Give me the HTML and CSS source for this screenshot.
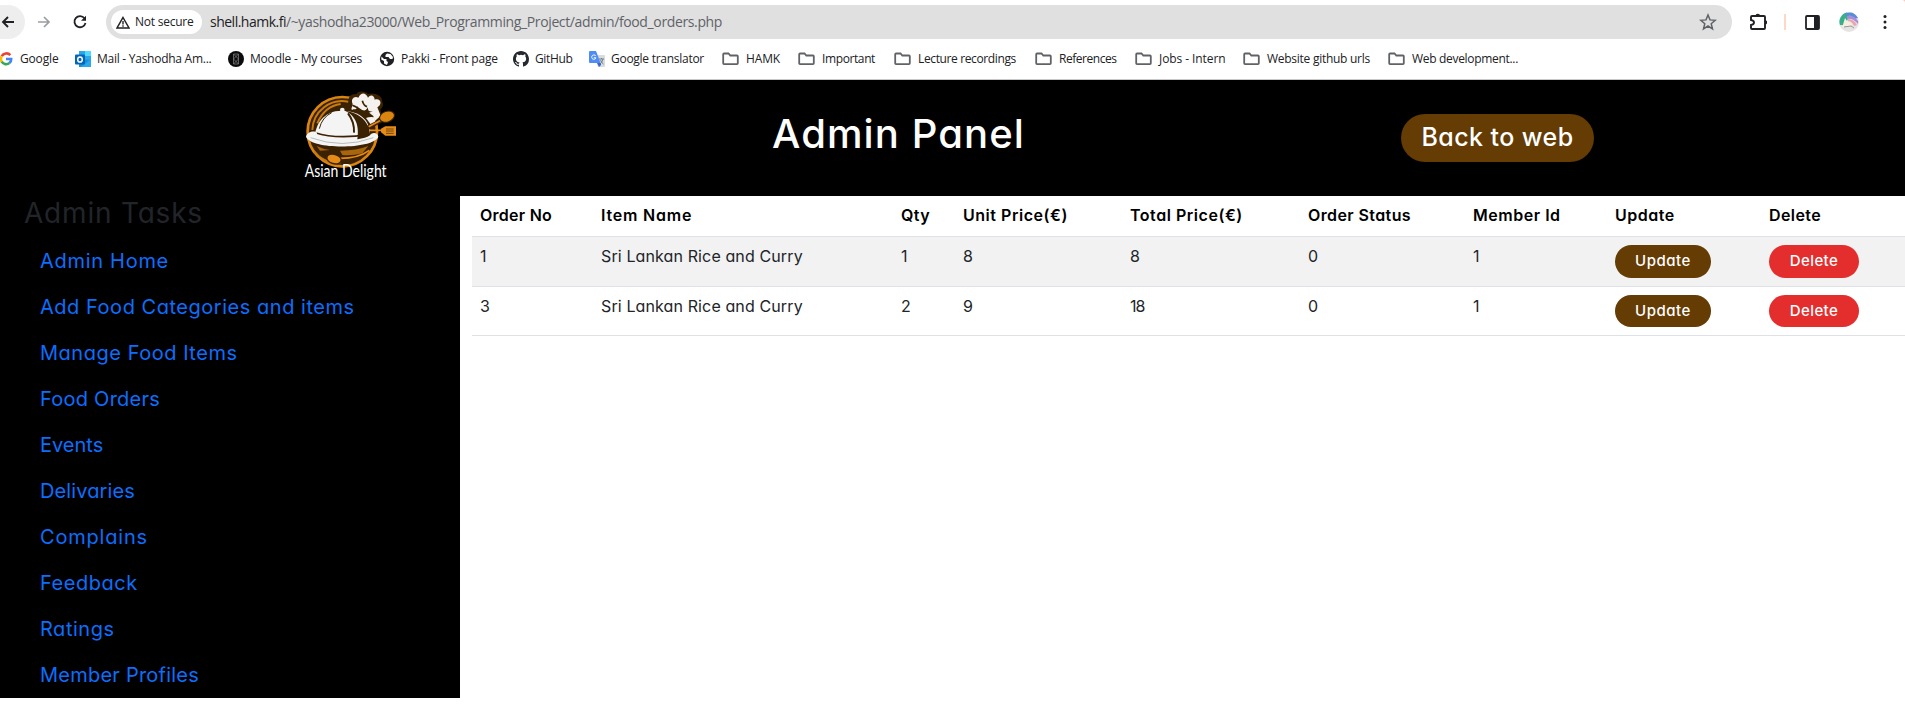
FILE: index.html
```html
<!DOCTYPE html>
<html lang="en">
<head>
<meta charset="utf-8">
<title>Food Orders</title>
<link rel="stylesheet" href="styles.css">
</head>
<body>
<div class="browser">
  <div class="toolbar">
    <span class="nav back"><svg width="16" height="16" viewBox="0 0 16 16"><path d="M14 8H3M8 3L3 8l5 5" fill="none" stroke="#202124" stroke-width="1.9"/></svg></span>
    <span class="nav forward"><svg width="16" height="16" viewBox="0 0 16 16"><path d="M2 8h11M8 3l5 5-5 5" fill="none" stroke="#9b9ea1" stroke-width="1.7"/></svg></span>
    <span class="nav reload"><svg width="16" height="16" viewBox="0 0 16 16"><path d="M12.500 4.200A5.600 5.600 0 1 0 13.500 9" fill="none" stroke="#202124" stroke-width="1.800"/><path d="M14 1.800v5H9z" fill="#202124"/></svg></span>
    <div class="omnibox">
      <span class="security"><svg width="14" height="13" viewBox="0 0 14 13"><path d="M7 1.500L13 12H1z" fill="none" stroke="#202124" stroke-width="1.500"/><path d="M7 5v3.400M7 9.300v1.500" stroke="#202124" stroke-width="1.400"/></svg><span class="t-secure">Not secure</span></span>
      <span class="url"><span class="domain">shell.hamk.fi</span><span class="path">/~yashodha23000/Web_Programming_Project/admin/food_orders.php</span></span>
      <svg class="star" width="18" height="18" viewBox="0 0 18 18"><path d="M9 2l2 4.900 5.200.4-4 3.400 1.300 5.200L9 13l-4.500 2.900 1.300-5.200-4-3.400 5.200-.4z" fill="none" stroke="#5f6368" stroke-width="1.500"/></svg>
    </div>
    <svg class="puzzle" width="18" height="18" viewBox="0 0 18 18"><path d="M3 3h12q1 0 1 1v11q0 1-1 1H3q-1 0-1-1v-3q3-.5 3-2.500T2 7V4q0-1 1-1z" fill="none" stroke="#202124" stroke-width="1.900"/><path d="M6.500 3a2.300 2.300 0 0 1 4.600 0zM16 7.200a2 2 0 0 1 0 4.400z" fill="#202124"/></svg>
    <span class="sep"></span>
    <svg class="panel" width="15" height="15" viewBox="0 0 15 15"><rect x="1" y="1" width="13" height="13" rx="1" fill="none" stroke="#202124" stroke-width="1.800"/><path d="M9 1h5v13H9z" fill="#202124"/></svg>
    <svg class="avatar" width="20" height="20" viewBox="0 0 20 20"><circle cx="10" cy="10" r="10" fill="#e6e4e2"/><path d="M1 13A9.500 9.500 0 0 1 8 .6L11 4 5 13z" fill="#35b08b"/><path d="M7 1q8-2.500 12 5l-4 1q-3-5-8-3z" fill="#598bd8"/><path d="M8 4q7-1 11 5v3q-5-6-11-5z" fill="#a88ddc"/><path d="M9 7q6 0 9 6l-3 1q-2-5-6-5z" fill="#eaa4ad"/><path d="M6 6l2 3 5 3-2 3-5-1-3 2z" fill="#f5efdf"/><path d="M5 15l7-1 3 2" fill="none" stroke="#999" stroke-width="1"/></svg>
    <svg class="dots" width="4" height="16" viewBox="0 0 4 16"><circle cx="2" cy="2.500" r="1.500"/><circle cx="2" cy="8" r="1.500"/><circle cx="2" cy="13.500" r="1.500"/></svg>
    <svg class="corner" width="3" height="3" viewBox="0 0 3 3"><path d="M0 0h3v3Q3 0 0 0z" fill="#ffc4ac"/></svg>
  </div>
  <div class="bookmarks">
    <span class="bm b1"><svg width="16" height="16" viewBox="0 0 16 16"><g fill="none" stroke-width="2.600"><path d="M12.300 4.200A5.200 5.200 0 0 0 3.700 5.300" stroke="#ea4335"/><path d="M3.700 5.300a5.200 5.200 0 0 0 0 5.400" stroke="#fbbc05"/><path d="M3.700 10.700a5.200 5.200 0 0 0 7.700 1.400" stroke="#34a853"/><path d="M11.400 12.100A5 5 0 0 0 13.200 8H8" stroke="#4285f4"/></g></svg><span>Google</span></span>
    <span class="bm b2"><svg width="16" height="16" viewBox="0 0 16 16"><path d="M4 0h12v10H4z" fill="#28a8ea"/><path d="M10 0h6v5h-6z" fill="#50d9ff"/><path d="M4 8l12 1v7H4z" fill="#1490df"/><path d="M16 8v8H6z" fill="#28a8ea"/><rect y="3.500" width="10" height="10" rx="1" fill="#0364b8"/><ellipse cx="5" cy="8.500" rx="2.300" ry="2.600" fill="none" stroke="#fff" stroke-width="1.500"/></svg><span>Mail - Yashodha Am...</span></span>
    <span class="bm b3"><svg width="16" height="16" viewBox="0 0 16 16"><circle cx="8" cy="8" r="8" fill="#0b0b0b"/><path d="M5.500 3h5v10h-5zM5.500 3l5 5-5 5M10.500 3l-5 5 5 5" fill="none" stroke="#777" stroke-width=".8"/></svg><span>Moodle - My courses</span></span>
    <span class="bm b4"><svg width="16" height="16" viewBox="0 0 16 16"><circle cx="8" cy="8" r="7.200" fill="#202124"/><path d="M2.500 5.500L5 8h2.500v2L9 11l-1 3-3-1.500V10L2.200 8.500zM8 2.500L6.500 4v2h3L11 8h2.500l.5-2-2.500-3z" fill="#fff"/></svg><span>Pakki - Front page</span></span>
    <span class="bm b5"><svg width="16" height="16" viewBox="0 0 16 16"><path d="M8 0C3.580 0 0 3.580 0 8c0 3.540 2.290 6.530 5.470 7.590.4.070.55-.17.55-.38 0-.19-.01-.82-.01-1.490-2.010.37-2.530-.49-2.690-.94-.09-.23-.48-.94-.82-1.130-.28-.15-.68-.52-.01-.53.63-.01 1.080.58 1.230.82.72 1.210 1.870.87 2.330.66.070-.52.28-.87.51-1.070-1.780-.2-3.640-.89-3.640-3.950 0-.87.31-1.590.82-2.150-.08-.2-.36-1.020.08-2.120 0 0 .67-.21 2.200.82a7.420 7.420 0 0 1 4 0c1.530-1.040 2.200-.82 2.200-.82.44 1.100.16 1.920.08 2.120.51.56.82 1.270.82 2.150 0 3.070-1.870 3.750-3.650 3.950.29.25.54.73.54 1.480 0 1.070-.01 1.930-.01 2.200 0 .21.15.46.55.38A8 8 0 0 0 16 8c0-4.420-3.580-8-8-8z" fill="#24292f"/></svg><span>GitHub</span></span>
    <span class="bm b6"><svg width="16" height="16" viewBox="0 0 16 16"><path d="M6 4h9q1 0 1 1v10q0 1-1 1H9z" fill="#dadada"/><path d="M8 12h4v2l-2 2z" fill="#3a66c8"/><path d="M1 0h6l1 2.500L11.500 12H1q-1 0-1-1V1q0-1 1-1z" fill="#4f8df5"/><path d="M6.800 5A2.200 2.200 0 1 0 7 6.800H4.800" fill="none" stroke="#fff"/><path d="M10 8h5M12.500 7v1M14 8q-1 4-3 5M11.500 9q1 3 3 4" fill="none" stroke="#66788a" stroke-width=".9"/></svg><span>Google translator</span></span>
    <span class="bm b7 folder"><svg width="17" height="14" viewBox="0 0 17 14"><path d="M2 1.500h4.500l1.800 2H15q.8 0 .8.800v7q0 .8-.8.800H2q-.8 0-.8-.8v-9q0-.8.8-.8z"/></svg><span>HAMK</span></span>
    <span class="bm b8 folder"><svg width="17" height="14" viewBox="0 0 17 14"><path d="M2 1.500h4.500l1.800 2H15q.8 0 .8.800v7q0 .8-.8.800H2q-.8 0-.8-.8v-9q0-.8.8-.8z"/></svg><span>Important</span></span>
    <span class="bm b9 folder"><svg width="17" height="14" viewBox="0 0 17 14"><path d="M2 1.500h4.500l1.800 2H15q.8 0 .8.800v7q0 .8-.8.800H2q-.8 0-.8-.8v-9q0-.8.8-.8z"/></svg><span>Lecture recordings</span></span>
    <span class="bm b10 folder"><svg width="17" height="14" viewBox="0 0 17 14"><path d="M2 1.500h4.500l1.800 2H15q.8 0 .8.800v7q0 .8-.8.800H2q-.8 0-.8-.8v-9q0-.8.8-.8z"/></svg><span>References</span></span>
    <span class="bm b11 folder"><svg width="17" height="14" viewBox="0 0 17 14"><path d="M2 1.500h4.500l1.800 2H15q.8 0 .8.800v7q0 .8-.8.800H2q-.8 0-.8-.8v-9q0-.8.8-.8z"/></svg><span>Jobs - Intern</span></span>
    <span class="bm b12 folder"><svg width="17" height="14" viewBox="0 0 17 14"><path d="M2 1.500h4.500l1.800 2H15q.8 0 .8.800v7q0 .8-.8.800H2q-.8 0-.8-.8v-9q0-.8.8-.8z"/></svg><span>Website github urls</span></span>
    <span class="bm b13 folder"><svg width="17" height="14" viewBox="0 0 17 14"><path d="M2 1.500h4.500l1.800 2H15q.8 0 .8.800v7q0 .8-.8.800H2q-.8 0-.8-.8v-9q0-.8.8-.8z"/></svg><span>Web development...</span></span>
  </div>
</div>
<header class="site-header">
  <svg class="logo" width="120" height="110" viewBox="0 0 360 330">
    <circle cx="157" cy="155" r="108" fill="#3b2203"/>
    <circle cx="157" cy="155" r="104" fill="none" stroke="#d9850f" stroke-width="8"/>
    <path d="M67 150a90 90 0 0 1 108-85M82 130q22-52 70-58M72 215q32 38 80 32" fill="none" stroke="#c87a10" stroke-width="6"/>
    <path d="M80 198q20 10 40 12l-30 2zM150 212q50 0 85-14l-18 22q-30 8-60 5z" fill="#a9650c"/>
    <path d="M178 72c-8-20 5-32 22-30 5-12 28-8 34 0 18-6 46 6 42 22 8 12-2 22-5 25l7 25-28 20-30-30z" fill="#3b2203"/>
    <path d="M188 72c-7-15 5-25 17-19 10-20 24-12 29 0 8-12 20-6 20 6 20-6 23 16 8 23l10 25-24 22-26-24 26-11c-14 2-14-4-14-12-8 16-28 14-32-4-2 12-10 16-18 10z" fill="#f4f1ee"/>
    <path d="M187 76q18 6 33 22M217 62q4 15 14 18" fill="none" stroke="#3b2203" stroke-width="5"/>
    <path d="M188 88q38-4 62 20l6 24q-40-8-68-34z" fill="#3b2203"/>
    <path d="M228 114q10-4 24-2l6 18-14 6z" fill="#f4f1ee"/>
    <path d="M155 92c68 0 90 44 84 80l-7 18H82l-8-18c2-40 28-80 81-80z" fill="#f4f4f4"/>
    <path d="M165 92c46 22 40 66 36 96h38c8-40-10-86-74-96z" fill="#3b2203"/>
    <path d="M174 100q20 26 18 58" fill="none" stroke="#3b2203" stroke-width="6"/>
    <path d="M76 158q60 20 160 6" fill="none" stroke="#3b2203" stroke-width="5"/>
    <path d="M88 146q8-34 37-48" fill="none" stroke="#3b2203" stroke-width="3"/>
    <circle cx="157" cy="90" r="7" fill="#f4f4f4"/>
    <path d="M48 170c5-17 25-18 34-12-18 24 145 32 161 4 10-6 20-2 22 8-14 38-202 40-217 0z" fill="#f4f4f4"/>
    <path d="M62 173q95 35 188 0" fill="none" stroke="#bbb" stroke-width="3"/>
    <path d="M233 143l42-22" stroke="#3b2203" stroke-width="12"/>
    <path d="M236 140l42-22" stroke="#e78b17" stroke-width="5"/>
    <ellipse cx="291" cy="110" rx="23" ry="16" transform="rotate(-20 291 110)" fill="#d9850f" stroke="#3b2203" stroke-width="3"/>
    <path d="M238 151h38" stroke="#e78b17" stroke-width="5"/>
    <path d="M273 146l13-7h32v28h-32l-13-10z" fill="#e78b17"/>
    <path d="M288 147h23M288 153h23M288 160h23" stroke="#3b2203" stroke-width="2"/>
    <path d="M150 235q55 0 88-24" fill="none" stroke="#e78b17" stroke-width="5"/>
    <ellipse cx="132" cy="237" rx="22" ry="14" transform="rotate(15 132 237)" fill="#e78b17" stroke="#3b2203" stroke-width="4"/>
    <text class="logo-name" x="44" y="292" textLength="246" lengthAdjust="spacingAndGlyphs">Asian Delight</text>
  </svg>
  <h1 class="title">Admin Panel</h1>
  <a class="pill web"><span>Back to web</span></a>
</header>
<main class="layout">
  <aside class="sidebar">
    <h2 class="tasks">Admin Tasks</h2>
    <ul class="menu">
      <li class="ls-7">Admin Home</li>
      <li class="ls-5">Add Food Categories and items</li>
      <li class="ls-5">Manage Food Items</li>
      <li class="ls-3">Food Orders</li>
      <li class="ls-0">Events</li>
      <li class="ls-1">Delivaries</li>
      <li class="ls-8">Complains</li>
      <li class="ls-5">Feedback</li>
      <li class="ls-5">Ratings</li>
      <li class="ls-2">Member Profiles</li>
    </ul>
  </aside>
  <section class="content">
    <table class="orders">
      <colgroup><col class="c1"><col class="c2"><col class="c3"><col class="c4"><col class="c5"><col class="c6"><col class="c7"><col class="c8"><col class="c9"></colgroup>
      <thead><tr><th class="ls-3">Order No</th><th class="ls-8">Item Name</th><th class="ls-4">Qty</th><th class="ls-5">Unit Price(€)</th><th class="ls-5">Total Price(€)</th><th class="ls-4">Order Status</th><th class="ls-5">Member Id</th><th class="ls-5">Update</th><th class="ls-4">Delete</th></tr></thead>
      <tbody>
        <tr class="odd"><td>1</td><td class="ls-1">Sri Lankan Rice and Curry</td><td>1</td><td>8</td><td>8</td><td>0</td><td>1</td><td><a class="pill update ls-5">Update</a></td><td><a class="pill delete ls-4">Delete</a></td></tr>
        <tr><td>3</td><td class="ls-1">Sri Lankan Rice and Curry</td><td>2</td><td>9</td><td class="tight">18</td><td>0</td><td>1</td><td><a class="pill update ls-5">Update</a></td><td><a class="pill delete ls-4">Delete</a></td></tr>
      </tbody>
    </table>
  </section>
</main>
</body>
</html>
```
FILE: styles.css
```css
* { box-sizing: border-box; }
body { margin: 0; background: #fff; color: #212529; font-family: Inter, "Noto Sans", sans-serif; font-feature-settings: "cv11"; font-size: 16px; line-height: 24px; overflow: hidden; white-space: nowrap; }
svg { display: block; flex: none; }

.ls-0 { letter-spacing: 0; }
.ls-1 { letter-spacing: .12px; }
.ls-2 { letter-spacing: .23px; }
.ls-3 { letter-spacing: .25px; }
.ls-4 { letter-spacing: .4px; }
.ls-5 { letter-spacing: .53px; }
.ls-7 { letter-spacing: .71px; }
.ls-8 { letter-spacing: .8px; }
.tight { letter-spacing: -1px; }

/* Browser chrome */
.browser { height: 80px; border-bottom: 1px solid #c8c8c8; font-family: "Open Sans", "Noto Sans", sans-serif; font-size: 12px; line-height: 16px; color: #202124; font-feature-settings: normal; overflow: hidden; }
.toolbar { position: relative; display: flex; align-items: center; height: 34px; margin-top: 5px; }
.nav { display: flex; align-items: center; flex: none; }
.back { width: 25px; height: 34px; border-radius: 0 17px 17px 0; background: #eee; }
.forward { margin-left: 11px; }
.reload { margin-left: 20px; }
.omnibox { display: flex; align-items: center; width: 1626px; height: 34px; margin-left: 18px; border-radius: 17px; background: #e0e0e0; flex: none; }
.security { display: flex; align-items: center; gap: 5px; width: 91px; height: 24px; margin-left: 5px; padding-left: 5px; border-radius: 12px; background: #fff; font-weight: 500; }
.t-secure { letter-spacing: -.24px; }
.url { margin-left: 8px; font-size: 14px; }
.domain { letter-spacing: -.5px; }
.path { color: #5f6368; letter-spacing: -.37px; }
.star { margin-left: auto; margin-right: 15px; }
.puzzle { margin-left: 17px; }
.sep { width: 2px; height: 16px; margin-left: 17px; background: #ffd7c5; }
.panel { margin-left: 19px; }
.avatar { margin-left: 19px; }
.dots { margin-left: 24px; fill: #202124; }
.corner { position: absolute; right: 0; top: -5px; }
.bookmarks { display: flex; align-items: center; height: 40px; margin-left: -2px; }
.bm { display: flex; align-items: center; gap: 6px; flex: none; }
.folder { gap: 7px; }
.folder path { fill: none; stroke: #5f6368; stroke-width: 1.8; }
.b1 { width: 77px; letter-spacing: -.16px; }
.b2 { width: 153px; letter-spacing: -.26px; }
.b3 { width: 151px; letter-spacing: -.2px; }
.b4 { width: 134px; letter-spacing: -.17px; }
.b5 { width: 76px; letter-spacing: -.35px; }
.b6 { width: 133px; letter-spacing: -.27px; }
.b7 { width: 76px; letter-spacing: -.15px; }
.b8 { width: 96px; letter-spacing: -.39px; }
.b9 { width: 141px; letter-spacing: -.37px; }
.b10 { width: 100px; letter-spacing: -.46px; }
.b11 { width: 108px; letter-spacing: -.08px; }
.b12 { width: 145px; letter-spacing: -.27px; }
.b13 { letter-spacing: -.31px; }

/* Site header */
.site-header { display: flex; align-items: flex-start; height: 116px; background: #000; color: #fff; }
.logo { margin-left: 290px; }
.logo-name { font-family: Lato, sans-serif; font-size: 49px; fill: #fff; }
.title { width: 629px; margin: 30px 0 0 362px; font-size: 40px; line-height: 48px; font-weight: 500; letter-spacing: 1.1px; }
.pill { display: flex; align-items: center; justify-content: center; color: #fff; font-weight: 500; border-radius: 24px; }
.web { width: 193px; height: 48px; margin-top: 34px; padding-bottom: 2px; background: #643c04; font-size: 25px; letter-spacing: .42px; }

/* Sidebar and orders table */
.layout { display: flex; align-items: flex-start; }
.sidebar { width: 460px; height: 502px; flex: none; background: #000; }
.tasks { margin: 0 0 0 24px; font-size: 28px; line-height: 34px; font-weight: 400; color: #212529; letter-spacing: .8px; }
.menu { margin: 8px 0 0 40px; padding: 0; list-style: none; color: #0d6efd; font-size: 20px; }
.menu li { height: 46px; line-height: 46px; }
.content { flex: 1; padding-left: 12px; }
.orders { width: 1433px; table-layout: fixed; border-collapse: collapse; }
.c1 { width: 121px; } .c2 { width: 300px; } .c3 { width: 62px; } .c4 { width: 167px; } .c5 { width: 178px; }
.c6 { width: 165px; } .c7 { width: 142px; } .c8 { width: 154px; } .c9 { width: 144px; }
.orders th, .orders td { padding: 7px 8px 9px; border-bottom: 1px solid #dee2e6; text-align: left; vertical-align: top; }
.orders th { font-weight: 600; color: #000; }
.odd { background: #f2f2f2; }
.orders .pill { height: 32.5px; margin: 1px 0 -1px; font-size: 15px; border-radius: 17px; }
.update { width: 96px; background: #643c04; }
.delete { width: 90px; background: #e42d2d; }
```
